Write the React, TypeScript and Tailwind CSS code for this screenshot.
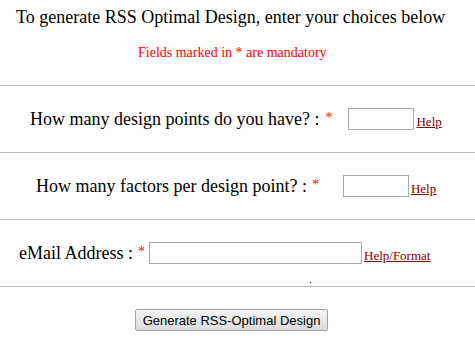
export default function App() {
  const serif = { fontFamily: '"Liberation Serif", "Times New Roman", serif' };
  return (
    <div className="w-[475px] h-[345px] bg-white text-black overflow-hidden" style={serif}>
      <div className="h-[85px] flex flex-col">
        <div className="mt-[5px] text-[18px] leading-[24px] pl-[16px]">To generate RSS Optimal Design, enter your choices below</div>
        <div className="mt-[15px] text-[14px] leading-[18px] text-[#ff0000] pl-[138px]">Fields marked in * are mandatory</div>
      </div>
      <div className="h-px bg-[#c0c0c0]" />
      <div className="h-[66px] flex items-center pl-[30px]">
        <span className="text-[18px] leading-[22px]">How many design points do you have? :</span>
        <span className="text-[14px] text-[#ff0000] ml-[6px] -mt-[4px]">*</span>
        <input className="ml-[16px] w-[66px] h-[22px] border border-[#a9a9a9] bg-white outline-none" />
        <a className="ml-[2px] mt-[5px] text-[13px] text-[#800000] underline" style={serif}>Help</a>
      </div>
      <div className="h-px bg-[#c0c0c0]" />
      <div className="h-[66px] flex items-center pl-[36px]">
        <span className="text-[18px] leading-[22px]">How many factors per design point? :</span>
        <span className="text-[14px] text-[#ff0000] ml-[5px] -mt-[4px]">*</span>
        <input className="ml-[24px] w-[66px] h-[22px] border border-[#a9a9a9] bg-white outline-none" />
        <a className="ml-[2px] mt-[5px] text-[13px] text-[#800000] underline" style={serif}>Help</a>
      </div>
      <div className="h-px bg-[#c0c0c0]" />
      <div className="h-[66px] flex items-center pl-[19px] relative">
        <span className="text-[18px] leading-[22px]">eMail Address :</span>
        <span className="text-[14px] text-[#ff0000] ml-[5px] -mt-[4px]">*</span>
        <input className="ml-[4px] w-[213px] h-[22px] border border-[#a9a9a9] bg-white outline-none" />
        <a className="ml-[2px] mt-[5px] text-[13px] text-[#800000] underline" style={serif}>Help/Format</a>
        <div className="absolute left-[310px] top-[62px] w-px h-px bg-[#0000ff]" />
      </div>
      <div className="h-px bg-[#c0c0c0]" />
      <div className="flex justify-center pt-[22px]">
        <button
          className="ml-[-12px] w-[193px] h-[22px] border border-[#a0a0a0] rounded-[2px] bg-gradient-to-b from-[#f4f4f4] to-[#dcdcdc] text-[13px] text-black leading-none"
          style={{ fontFamily: '"Liberation Sans", Arial, sans-serif' }}
        >
          Generate RSS-Optimal Design
        </button>
      </div>
    </div>
  );
}
